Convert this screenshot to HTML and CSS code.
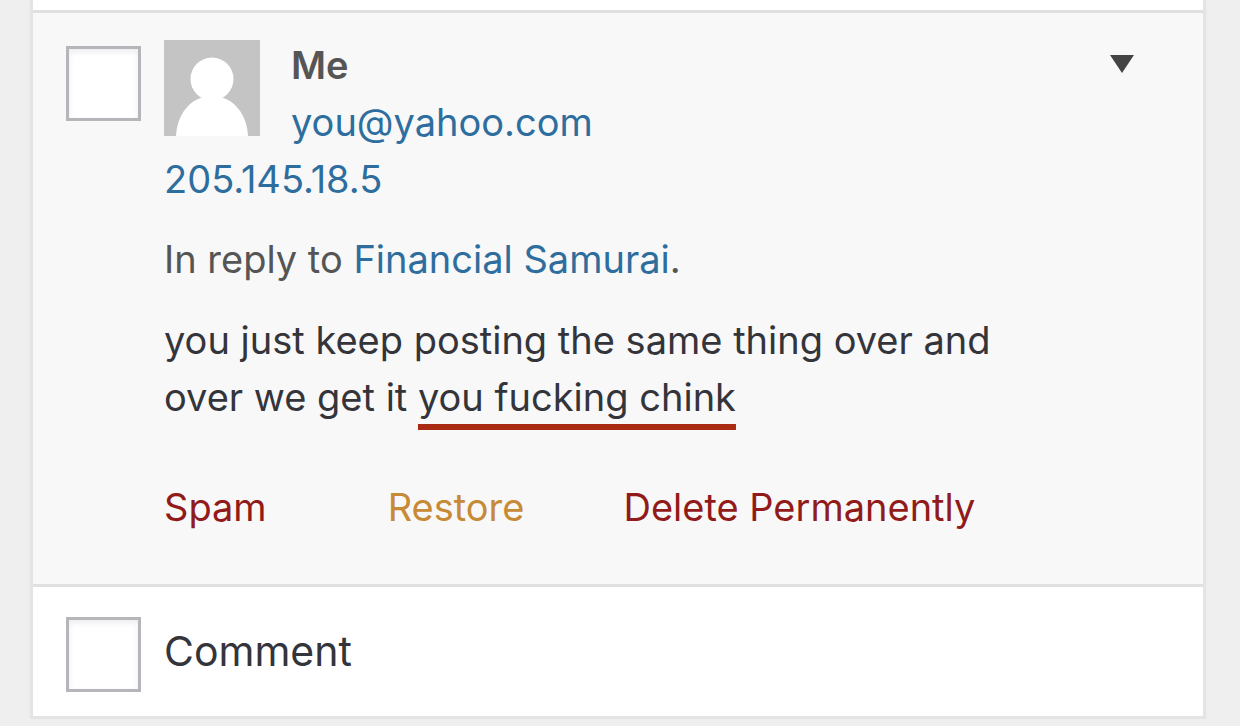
FILE: index.html
```html
<!DOCTYPE html>
<html lang="en">
<head>
  <meta charset="UTF-8">
  <meta name="viewport" content="width=device-width, initial-scale=1.0">
  <title>Comments</title>
  <link rel="stylesheet" href="styles.css">
</head>
<body>
  <main class="comments">
    <article class="comment">
      <input type="checkbox" class="check" aria-label="Select comment by Me">
      <div class="content">
        <header class="author">
          <svg class="avatar" viewBox="0 0 96 96" aria-hidden="true">
            <rect width="96" height="96" fill="#c4c4c4"/>
            <circle cx="48" cy="39" r="21.5" fill="#fff"/>
            <path d="M12 96C13 77 23 62 38 57.500H58C73 62 83 77 84 96Z" fill="#fff"/>
          </svg>
          <div class="who">
            <strong>Me</strong>
            <a href="#">you@yahoo.com</a>
          </div>
          <button type="button" class="toggle" aria-label="Show more details">
            <svg viewBox="0 0 24 18" aria-hidden="true"><path d="M0 0H24L12 18Z" fill="#444"/></svg>
          </button>
        </header>
        <a class="ip" href="#">205.145.18.5</a>
        <p class="reply">In reply to <a href="#">Financial Samurai</a>.</p>
        <p class="text"><span>you just keep posting the same thing over and over we get it </span><span class="marked">you fucking chink</span></p>
        <nav class="actions">
          <a class="spam" href="#">Spam</a>
          <a class="restore" href="#">Restore</a>
          <a class="delete" href="#">Delete Permanently</a>
        </nav>
      </div>
    </article>
    <footer class="column-footer">
      <input type="checkbox" class="check" id="select-all">
      <label for="select-all">Comment</label>
    </footer>
  </main>
</body>
</html>
```
FILE: styles.css
```css
* {
  box-sizing: border-box;
}
body {
  margin: 0;
  background: #efefef;
  color: #555;
  font-family: Inter, sans-serif;
  font-size: 38px;
  line-height: 57px;
}
a {
  color: #2e6e9e;
  text-decoration: none;
}
p {
  margin: 0;
}
strong {
  font-weight: 600;
}
.comments {
  margin: 0 34px 0 30px;
  padding-top: 10px;
  background: #fff;
  border: 3px solid #e4e4e4;
  border-top: 0;
  box-shadow: 0 3px 3px #e9e9e9;
}
.comment {
  display: flex;
  align-items: flex-start;
  padding: 24px 69px 48px 33px;
  background: #f8f8f8;
  border-top: 3px solid #e0e0e0;
  border-bottom: 3px solid #e0e0e0;
}
.check {
  appearance: none;
  flex: none;
  width: 75px;
  height: 75px;
  margin: 0 23px 0 0;
  background: #fff;
  border: 3px solid #b5b5ba;
  box-shadow: inset 0 3px 6px #ededf2;
}
.comment .check {
  margin-top: 9px;
}
.content {
  flex: 1;
}
.author {
  display: flex;
  align-items: flex-start;
}
.avatar {
  width: 96px;
  height: 96px;
  margin: 3px 31px 0 0;
}
.who {
  display: flex;
  flex: 1;
  flex-direction: column;
}
.toggle {
  padding: 18px 0;
  background: none;
  border: 0;
}
.toggle svg {
  display: block;
  width: 24px;
  height: 18px;
}
.ip {
  display: block;
}
.reply {
  margin-top: 23px;
}
.text {
  max-width: 880px;
  margin-top: 24px;
  color: #34343b;
}
.marked {
  text-decoration: underline #a92b13 6px;
  text-decoration-skip-ink: none;
  text-underline-offset: 13px;
}
.actions {
  display: flex;
  gap: 99px;
  margin-top: 53px;
}
.spam,
.delete {
  color: #911b1b;
}
.spam {
  margin-right: 22px;
}
.restore {
  color: #c78a36;
}
.column-footer {
  display: flex;
  align-items: center;
  padding: 30px 33px 24px;
  color: #34343b;
  font-size: 41px;
}
.column-footer label {
  padding-bottom: 6px;
}
```
